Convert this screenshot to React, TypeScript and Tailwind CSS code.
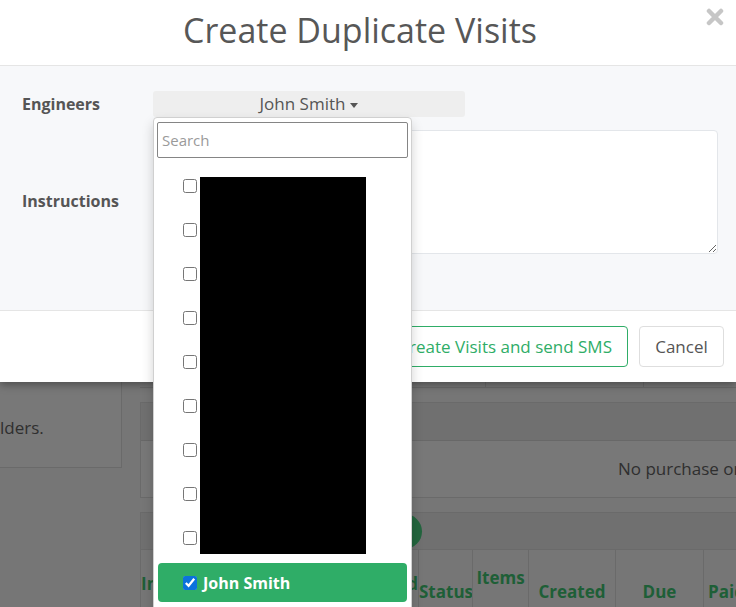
import React from "react";

const names = Array.from({ length: 9 }, (_, i) => `Engineer ${i + 1}`);

function CloseIcon() {
  return (
    <svg width="18" height="18" viewBox="0 0 18 18" aria-hidden>
      <path d="M3 3 L15 15 M15 3 L3 15" stroke="#c6c6c6" strokeWidth="4.5" strokeLinecap="round" />
    </svg>
  );
}

function EngineerDropdown() {
  return (
    <div className="absolute left-[153px] top-[117px] z-20 h-[520px] w-[259px] rounded-t-[4px] border border-[#d0d0d0] bg-white shadow-[0_6px_12px_rgba(0,0,0,0.18)]">
      <div className="px-[3px] pt-[4px]">
        <input
          readOnly
          placeholder="Search"
          className="h-[36px] w-full rounded-[2px] border border-[#858585] px-[4px] text-[15px] text-[#555] outline-none placeholder:text-[#9a9a9a]"
        />
      </div>
      <ul className="m-0 mt-[8px] flex list-none flex-col gap-[4px] p-0">
        {names.map((name) => (
          <li key={name} className="mx-[4px] flex h-[40px] items-center gap-[6px] pl-[25px]">
            <input type="checkbox" readOnly className="m-0 h-[14px] w-[14px]" />
            <span className="text-[16px] text-[#333]">{name}</span>
          </li>
        ))}
        <li className="mx-[4px] mt-[1px] flex h-[39px] items-center gap-[6px] rounded-[4px] bg-[#2fad67] pl-[25px]">
          <input type="checkbox" checked readOnly className="m-0 h-[14px] w-[14px] accent-[#0b72dc]" />
          <span className="text-[16px] font-bold text-white">John Smith</span>
        </li>
      </ul>
      {/* redacted names */}
      <div className="absolute left-[46px] top-[59px] h-[377px] w-[166px] bg-black" />
    </div>
  );
}

export default function App() {
  return (
    <div
      className="relative h-[607px] w-[736px] overflow-hidden bg-[#767676]"
      style={{ fontFamily: '"Open Sans", "Noto Sans", sans-serif' }}
    >
      {/* modal */}
      <div className="relative z-10 flex flex-col bg-white shadow-[0_3px_8px_rgba(0,0,0,0.35)]">
        <div className="relative flex h-[66px] items-center justify-center border-b border-[#e5e5e5] pb-[4px] pr-[16px]">
          <h1 className="m-0 text-[34px] font-normal text-[#575757]">Create Duplicate Visits</h1>
          <button type="button" className="absolute right-[12px] top-[8px] border-0 bg-transparent p-0">
            <CloseIcon />
          </button>
        </div>

        <div className="flex h-[244px] flex-col gap-[13px] bg-[#f7f8fa] pl-[22px] pr-[18px] pt-[25px]">
          <div className="flex items-center">
            <label className="w-[131px] text-[16px] font-bold text-[#555]">Engineers</label>
            <button
              type="button"
              className="flex h-[26px] w-[312px] items-center justify-center gap-[5px] rounded-[3px] border-0 bg-[#eeeeee] text-[17px] text-[#555]"
            >
              John Smith
              <span className="mt-[2px] block h-0 w-0 border-x-[4px] border-t-[5px] border-x-transparent border-t-[#555]" />
            </button>
          </div>
          <div className="flex items-start">
            <label className="w-[131px] pt-[59px] text-[16px] font-bold text-[#555]">Instructions</label>
            <textarea
              readOnly
              className="h-[124px] flex-1 rounded-[4px] border border-[#e3e6ea] bg-white outline-none"
            />
          </div>
        </div>

        <div className="flex h-[72px] items-center justify-end gap-[11px] border-t border-[#e5e5e5] pr-[12px]">
          <button
            type="button"
            className="h-[41px] rounded-[4px] border border-[#2fad67] bg-white px-[15px] text-[17px] text-[#2fad67]"
          >
            Create Visits and send SMS
          </button>
          <button
            type="button"
            className="h-[41px] w-[85px] rounded-[4px] border border-[#dedede] bg-white text-[17px] text-[#555]"
          >
            Cancel
          </button>
        </div>
      </div>

      {/* page behind the backdrop */}
      <div className="flex text-[17px] text-[#2f2f2f]">
        <div className="h-[86px] w-[122px] shrink-0 border-b border-r border-[#6a6a6a] bg-[#787878] pt-[33px]">
          <p className="m-0">lders.</p>
        </div>
        <div className="ml-[18px] flex min-w-0 flex-1 flex-col">
          <div className="flex h-[6px] border-b border-[#6a6a6a]">
            <div className="w-[346px] shrink-0 border-r border-[#6a6a6a]" />
            <div className="w-[158px] shrink-0 border-r border-[#6a6a6a]" />
          </div>
          <div className="mt-[14px] flex flex-col border border-r-0 border-[#6a6a6a]">
            <div className="h-[38px] border-b border-[#686868] bg-[#707070]" />
            <div className="flex h-[56px] items-center overflow-hidden whitespace-nowrap bg-[#787878] pl-[477px]">
              No purchase orders
            </div>
          </div>
          <div className="mt-[14px] flex flex-col border border-r-0 border-[#6a6a6a]">
            <div className="flex h-[36px] items-center bg-[#707070]">
              <div className="ml-[160px] h-[35px] w-[121px] rounded-full bg-[#23653e]" />
            </div>
            <div className="grid h-[62px] grid-cols-[277px_54px_56px_87px_88px_1fr] overflow-hidden whitespace-nowrap border-t border-[#6a6a6a] text-[17px] font-bold text-[#1e5f37]">
              <div className="flex items-end justify-between pb-[15px]">
                <span>Invoice</span>
                <span>Invoiced</span>
              </div>
              <div className="flex items-end border-l border-[#6a6a6a] pb-[7px]">Status</div>
              <div className="flex items-start justify-center border-l border-[#6a6a6a] pt-[15px]">Items</div>
              <div className="flex items-end justify-center border-l border-[#6a6a6a] pb-[7px]">Created</div>
              <div className="flex items-end justify-center border-l border-[#6a6a6a] pb-[7px]">Due</div>
              <div className="flex items-end border-l border-[#6a6a6a] pb-[7px] pl-[4px]">Paid</div>
            </div>
          </div>
        </div>
      </div>

      <EngineerDropdown />
    </div>
  );
}
